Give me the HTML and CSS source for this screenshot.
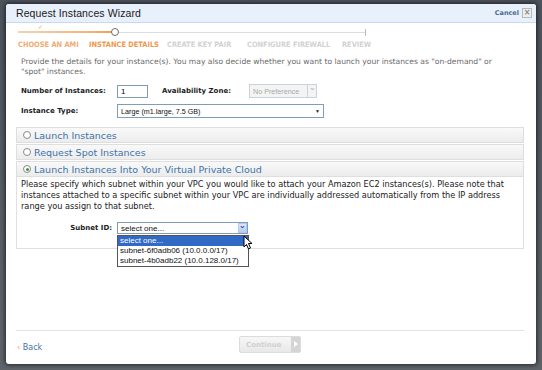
FILE: index.html
```html
<!DOCTYPE html>
<html lang="en">
<head>
    <meta charset="UTF-8">
    <title>Request Instances Wizard</title>
    <link rel="stylesheet" href="styles.css">
</head>
<body>
<div class="dialog">
    <div class="dialog-header">
        <span class="dialog-title">Request Instances Wizard</span>
        <a class="cancel">Cancel <span class="close-box">&#215;</span></a>
    </div>

    <div class="stepper">
        <div class="track">
            <span class="track-done"></span>
            <span class="step-check">&#10003;</span>
            <span class="step-dot"></span>
            <span class="track-end"></span>
        </div>
        <div class="step-labels">
            <span class="step done">Choose an AMI</span>
            <span class="step current">Instance Details</span>
            <span class="step">Create Key Pair</span>
            <span class="step">Configure Firewall</span>
            <span class="step">Review</span>
        </div>
    </div>

    <div class="dialog-body">
        <p class="intro">Provide the details for your instance(s). You may also decide whether you want to launch your instances as "on-demand" or "spot" instances.</p>

        <div class="form-row">
            <label class="field-label">Number of Instances:</label>
            <input class="text-input" type="text" value="1">
            <label class="field-label zone-label">Availability Zone:</label>
            <div class="select disabled">
                <span>No Preference</span>
                <span class="select-btn">&#8964;</span>
            </div>
        </div>
        <div class="form-row">
            <label class="field-label">Instance Type:</label>
            <div class="select wide">
                <span>Large (m1.large, 7.5 GB)</span>
                <span class="caret">&#9660;</span>
            </div>
        </div>

        <div class="panels">
            <div class="panel-head"><span class="radio"></span>Launch Instances</div>
            <div class="panel-head"><span class="radio"></span>Request Spot Instances</div>
            <div class="panel-head"><span class="radio checked"></span>Launch Instances Into Your Virtual Private Cloud</div>
            <div class="panel-body">
                <p>Please specify which subnet within your VPC you would like to attach your Amazon EC2 instances(s). Please note that instances attached to a specific subnet within your VPC are individually addressed automatically from the IP address range you assign to that subnet.</p>
                <div class="subnet-row">
                    <label class="field-label">Subnet ID:</label>
                    <div class="subnet-select">
                        <div class="select open">
                            <span>select one...</span>
                            <span class="select-btn blue">&#8964;</span>
                        </div>
                        <ul class="options">
                            <li class="selected">select one...</li>
                            <li>subnet-6f0adb06 (10.0.0.0/17)</li>
                            <li>subnet-4b0adb22 (10.0.128.0/17)</li>
                        </ul>
                        <svg class="pointer" width="11" height="15" viewBox="0 0 11 15">
                            <path d="M1 1 L1 12 L3.5 9.5 L5.5 14 L7.5 13 L5.5 8.5 L9 8.5 Z" fill="#fff" stroke="#000" stroke-width="1"/>
                        </svg>
                    </div>
                </div>
            </div>
        </div>
    </div>

    <div class="dialog-footer">
        <a class="back"><span class="back-arrow">&#8249;</span> Back</a>
        <button class="continue" disabled>Continue <span class="continue-arrow"></span></button>
    </div>
</div>
</body>
</html>
```

FILE: styles.css
```css
body {
    margin: 0;
    width: 542px;
    height: 370px;
    background: linear-gradient(#4d535c, #5f646b);
    font-family: "DejaVu Sans", Verdana, sans-serif;
    overflow: hidden;
}
.dialog {
    margin: 4px 0 0 6px;
    width: 530px;
    height: 360px;
    background: #fff;
    border-radius: 3px;
    box-shadow: 0 0 4px 1px rgba(0, 0, 0, 0.6);
    display: flex;
    flex-direction: column;
    overflow: hidden;
}
.dialog-header {
    height: 18px;
    flex-shrink: 0;
    background: #e8f0fb;
    border-bottom: 1px solid #c9daf0;
    display: flex;
    align-items: center;
    justify-content: space-between;
    padding: 0 4px 0 10px;
}
.dialog-title {
    font-family: "Liberation Sans", Arial, sans-serif;
    font-size: 10.5px;
    color: #1a1a1a;
    letter-spacing: 0.1px;
}
.cancel {
    font-size: 6.5px;
    font-weight: bold;
    color: #4a6b94;
    display: flex;
    align-items: center;
    gap: 3px;
}
.close-box {
    width: 8px;
    height: 8px;
    border: 1px solid #b9b9b9;
    background: #eee;
    color: #888;
    font-size: 8px;
    line-height: 7px;
    text-align: center;
}

.stepper {
    padding: 5px 0 0 12px;
    height: 30px;
    flex-shrink: 0;
    box-sizing: border-box;
}
.track {
    position: relative;
    width: 348px;
    height: 10px;
}
.track::before {
    content: "";
    position: absolute;
    left: 0;
    right: 0;
    top: 4px;
    height: 1px;
    background: #dcdcdc;
}
.track-done {
    position: absolute;
    left: 0;
    top: 3px;
    width: 96px;
    height: 2px;
    background: linear-gradient(to right, #f6d2b0, #f4b27a 75%, #f59a4e);
}
.step-check {
    position: absolute;
    left: 20px;
    top: -5px;
    font-size: 6px;
    color: #f0a060;
}
.step-dot {
    position: absolute;
    left: 93px;
    top: 0;
    width: 6px;
    height: 6px;
    border: 1.5px solid #6f6f6f;
    border-radius: 50%;
    background: #fff;
}
.track-end {
    position: absolute;
    right: 0;
    top: 1px;
    width: 1px;
    height: 7px;
    background: #bcbcbc;
}
.step-labels {
    display: grid;
    grid-template-columns: 71px 78px 80px 95px auto;
    width: 360px;
    margin-top: 2px;
}
.step {
    font-family: "DejaVu Sans Condensed", "DejaVu Sans", sans-serif;
    font-size: 7.4px;
    font-weight: bold;
    text-transform: uppercase;
    color: #d2d2d2;
    white-space: nowrap;
}
.step.done {
    color: #f2ab70;
}
.step.current {
    color: #ee9850;
}

.dialog-body {
    flex: 1;
    padding: 0 12px 0 10px;
}
.intro {
    margin: 4px 0 7px 5px;
    padding-right: 20px;
    font-size: 7.6px;
    line-height: 10px;
    color: #6a6a6a;
}
.form-row {
    display: flex;
    align-items: center;
    height: 14px;
    margin: 0 0 6px 5px;
}
.field-label {
    font-size: 7px;
    font-weight: bold;
    color: #222;
    width: 96px;
    flex-shrink: 0;
}
.zone-label {
    width: 87px;
    margin-left: 14px;
}
.text-input {
    width: 31px;
    height: 13px;
    box-sizing: border-box;
    border: 1px solid #7f9db9;
    padding: 1px 3px;
    font-family: "Liberation Sans", Arial, sans-serif;
    font-size: 8px;
    margin: 0;
}
.select {
    height: 14px;
    box-sizing: border-box;
    border: 1px solid #7f9db9;
    display: flex;
    align-items: center;
    justify-content: space-between;
    padding-left: 3px;
    font-family: "Liberation Sans", Arial, sans-serif;
    font-size: 7.2px;
    color: #111;
    background: #fff;
}
.select.disabled {
    width: 68px;
    border-color: #c9d3de;
    color: #a8a8a8;
    background: #f4f4f4;
}
.select.wide {
    width: 207px;
    padding-right: 3px;
}
.caret {
    font-size: 5px;
    color: #222;
}
.select-btn {
    width: 9px;
    height: 12px;
    box-sizing: border-box;
    border-left: 1px solid #c9d3de;
    color: #aaa;
    font-size: 8px;
    line-height: 5px;
    text-align: center;
}
.select-btn.blue {
    height: 10px;
    background: linear-gradient(#dbe7fb, #b7cdf4);
    border: 1px solid #b3c8ee;
    color: #4d6185;
    font-weight: bold;
    line-height: 3px;
}

.panels {
    margin-top: 9px;
    display: flex;
    flex-direction: column;
    gap: 1px;
}
.panel-head {
    height: 14px;
    border: 1px solid #dedede;
    background: linear-gradient(#f9f9f9, #ececec);
    display: flex;
    align-items: center;
    padding-left: 6px;
    font-size: 9.5px;
    color: #3e72a8;
}
.radio {
    width: 6px;
    height: 6px;
    border: 1px solid #8a8a8a;
    border-radius: 50%;
    background: #fff;
    margin-right: 3px;
    position: relative;
}
.radio.checked::after {
    content: "";
    position: absolute;
    left: 1.5px;
    top: 1.5px;
    width: 3px;
    height: 3px;
    border-radius: 50%;
    background: #3e9a3e;
}
.panel-body {
    margin-top: -1px;
    border: 1px solid #e0e0e0;
    border-top: none;
    height: 72px;
    padding: 2px 4px 0 4px;
    box-sizing: border-box;
}
.panel-body p {
    margin: 0;
    font-size: 8.2px;
    line-height: 11px;
    color: #222;
}
.subnet-row {
    display: flex;
    align-items: center;
    margin-top: 10px;
}
.subnet-row .field-label {
    width: 91px;
    text-align: right;
    padding-right: 5px;
}
.subnet-select {
    position: relative;
}
.subnet-select .select {
    width: 131px;
    height: 12px;
    padding-right: 0;
    font-size: 8px;
}
.options {
    position: absolute;
    left: 0;
    top: 13px;
    width: 132px;
    margin: 0;
    padding: 0;
    list-style: none;
    border: 1px solid #555;
    background: #fff;
    font-family: "Liberation Sans", Arial, sans-serif;
    font-size: 8px;
    color: #111;
    box-sizing: border-box;
}
.options li {
    height: 10px;
    line-height: 10px;
    padding-left: 2px;
}
.options li.selected {
    background: #316ac5;
    color: #fff;
}
.pointer {
    position: absolute;
    left: 126px;
    top: 13px;
}

.dialog-footer {
    margin: 0 12px 0 10px;
    border-top: 1px solid #e3e3e3;
    height: 33px;
    flex-shrink: 0;
    display: flex;
    align-items: center;
    position: relative;
}
.back {
    font-size: 8px;
    color: #3e72a8;
    margin-left: 1px;
}
.back-arrow {
    color: #f0a060;
}
.continue {
    position: absolute;
    left: 223px;
    top: 5px;
    width: 62px;
    height: 17px;
    border: 1px solid #dcdcdc;
    border-radius: 2px;
    background: linear-gradient(#f7f7f7, #e8e8e8);
    font-family: "DejaVu Sans", sans-serif;
    font-size: 7px;
    font-weight: bold;
    color: #d0d0d0;
    padding: 0 0 0 6px;
    text-align: left;
    display: flex;
    align-items: center;
    justify-content: space-between;
}
.continue-arrow {
    width: 9px;
    height: 15px;
    background: #d5d5d5;
    position: relative;
}
.continue-arrow::after {
    content: "";
    position: absolute;
    left: 3px;
    top: 4px;
    border-left: 4px solid #fff;
    border-top: 3.5px solid transparent;
    border-bottom: 3.5px solid transparent;
}
```
